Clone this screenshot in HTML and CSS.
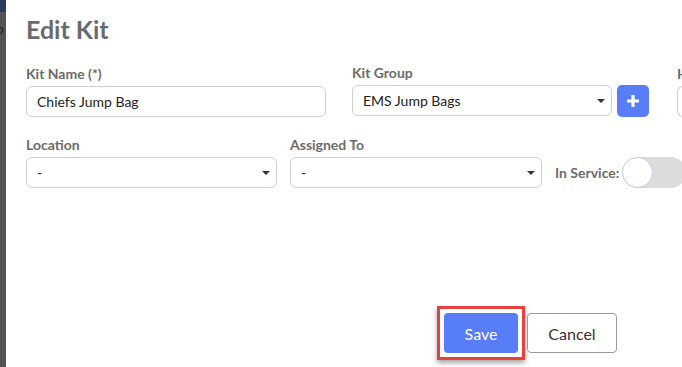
FILE: index.html
```html
<!DOCTYPE html>
<html>
<head>
<meta charset="utf-8">
<link rel="stylesheet" href="styles.css">
</head>
<body>
<div class="page">
  <aside class="backdrop">
    <div class="backdrop-top"></div>
    <span class="backdrop-text">p</span>
  </aside>
  <main class="modal">
    <h1 class="title">Edit Kit</h1>
    <div class="row row-1">
      <div class="field f-name">
        <label class="label">Kit Name (*)</label>
        <div class="input">Chiefs Jump Bag</div>
      </div>
      <div class="field f-group">
        <label class="label">Kit Group</label>
        <div class="group-line">
          <div class="select sel-group"><span>EMS Jump Bags</span><i class="caret"></i></div>
          <button class="plus" type="button">
            <svg width="14" height="14" viewBox="0 0 14 14"><path d="M7 1v12M1 7h12" stroke="#fff" stroke-width="3.2" stroke-linecap="butt"/></svg>
          </button>
        </div>
      </div>
      <div class="field f-extra">
        <label class="label">H</label>
        <div class="input input-cut"></div>
      </div>
    </div>
    <div class="row row-2">
      <div class="field f-loc">
        <label class="label">Location</label>
        <div class="select"><span>-</span><i class="caret"></i></div>
      </div>
      <div class="field f-assign">
        <label class="label">Assigned To</label>
        <div class="select"><span>-</span><i class="caret"></i></div>
      </div>
      <div class="service">
        <span class="label service-label">In Service:</span>
        <div class="toggle"><div class="knob"></div></div>
      </div>
    </div>
    <div class="footer">
      <div class="highlight"><button class="btn btn-save" type="button">Save</button></div>
      <button class="btn btn-cancel" type="button">Cancel</button>
    </div>
  </main>
</div>
</body>
</html>
```
FILE: styles.css
```css
* { box-sizing: border-box; }
html, body { margin: 0; padding: 0; }
body {
  width: 682px;
  height: 367px;
  overflow: hidden;
  background: #fff;
  font-family: Lato, "Liberation Sans", sans-serif;
}
.page {
  display: flex;
  height: 367px;
}
.backdrop {
  width: 6px;
  flex: none;
  background: #535353;
  position: relative;
  overflow: hidden;
}
.backdrop-top {
  height: 12px;
  background: #2d3b5a;
}
.backdrop-text {
  position: absolute;
  top: 20px;
  left: -4px;
  color: #222;
  font-size: 14px;
}
.modal {
  flex: 1;
  padding: 14px 0 0 20px;
  overflow: hidden;
  display: flex;
  flex-direction: column;
}
.title {
  margin: 0;
  font-size: 25px;
  font-weight: 700;
  color: #6b6b6b;
  line-height: 30px;
}
.row {
  display: flex;
  align-items: flex-end;
  flex-wrap: nowrap;
}
.row-1 { margin-top: 21px; }
.row-2 { margin-top: 20px; }
.field {
  display: flex;
  flex-direction: column;
  flex: none;
}
.label {
  font-size: 14px;
  font-weight: 700;
  color: #6b6b6b;
  line-height: 16px;
  margin-bottom: 4px;
  white-space: nowrap;
}
.f-name { width: 300px; margin-right: 26px; }
.f-group { width: 297px; margin-right: 28px; }
.f-extra { width: 60px; }
.f-loc { width: 251px; margin-right: 13px; }
.f-assign { width: 252px; margin-right: 13px; }
.input, .select {
  height: 31px;
  border: 1px solid #cfcfcf;
  border-radius: 6px;
  background: #fff;
  font-size: 14px;
  color: #222;
  padding: 0 10px;
  display: flex;
  align-items: center;
}
.input-cut { border-right: none; border-radius: 6px 0 0 6px; }
.select { justify-content: space-between; padding-right: 6px; }
.select span { line-height: 1; }
.caret {
  width: 0;
  height: 0;
  border-left: 4px solid transparent;
  border-right: 4px solid transparent;
  border-top: 4px solid #333;
}
.group-line {
  display: flex;
  align-items: flex-start;
}
.sel-group { width: 260px; }
.plus {
  margin-left: 5px;
  width: 32px;
  height: 32px;
  border: none;
  border-radius: 5px;
  background: #577df7;
  padding: 0;
  display: flex;
  align-items: center;
  justify-content: center;
}
.service {
  display: flex;
  align-items: center;
  height: 31px;
  flex: none;
}
.service-label {
  margin: 0 3px 0 0;
  color: #6b6b6b;
}
.toggle {
  width: 64px;
  height: 31px;
  border-radius: 16px;
  background: #dcdcdc;
  flex: none;
  position: relative;
}
.knob {
  position: absolute;
  left: 0;
  top: 0;
  width: 31px;
  height: 31px;
  border-radius: 50%;
  background: #fff;
  border: 1px solid #c9cde0;
}
.footer {
  display: flex;
  align-items: center;
  margin-top: 118px;
  padding-left: 411px;
}
.highlight {
  border: 3px solid #e6403f;
  padding: 4px;
  box-shadow: 0 3px 5px rgba(0,0,0,0.35);
}
.btn {
  font-family: Lato, "Liberation Sans", sans-serif;
  font-size: 16px;
  height: 40px;
  border-radius: 4px;
  cursor: pointer;
}
.btn-save {
  width: 74px;
  background: #577df7;
  color: #fff;
  border: none;
  display: block;
}
.btn-cancel {
  margin-left: 2px;
  width: 90px;
  background: #fff;
  color: #333;
  border: 1px solid #999;
}
```
